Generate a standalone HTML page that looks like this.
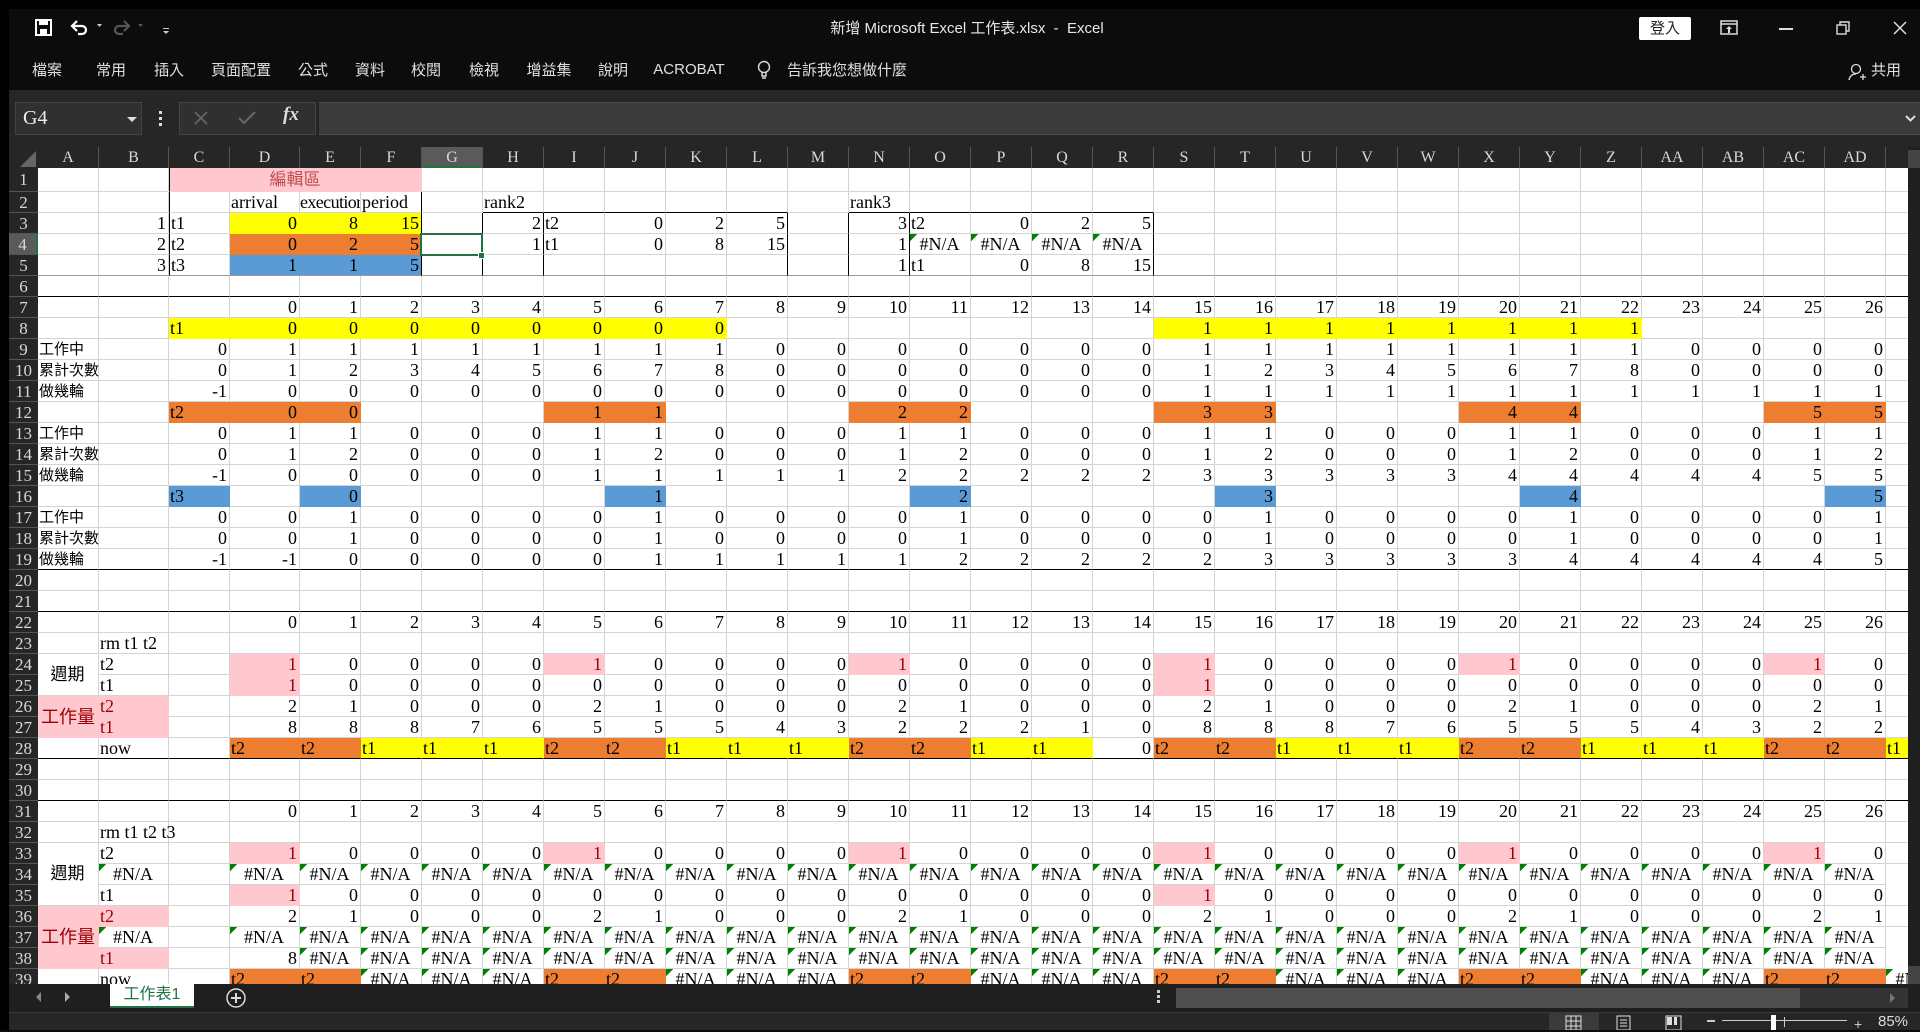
<!DOCTYPE html>
<html><head><meta charset="utf-8">
<style>
*{box-sizing:border-box;margin:0;padding:0}
html,body{width:1920px;height:1030px;overflow:hidden;background:#0c0c0c;font-family:"Liberation Sans","Noto Sans CJK TC",sans-serif}
.abs{position:absolute}
#left{left:0;top:0;width:9px;height:1030px;background:#000}
#top{left:0;top:0;width:1920px;height:9px;background:#000}
.tab{position:absolute;top:59px;color:#e0e0e0;font-size:15px;transform:translateX(-50%);white-space:nowrap}
#fa{left:9px;top:90px;width:1911px;height:57px;background:#262626}
#namebox{left:15px;top:102px;width:127px;height:33px;background:#303030;border:1px solid #444;color:#eee;font-family:"Liberation Serif",serif;font-size:20px;padding:4px 7px}
#btns{left:179px;top:102px;width:137px;height:33px;background:#303030;border:1px solid #444}
#fx{left:319px;top:102px;width:1601px;height:33px;background:#3b3b3b;border-top:1px solid #4a4a4a;border-bottom:1px solid #4a4a4a}
#colhdr{left:9px;top:147px;width:1899px;height:21px;background:#262626}
.ch{position:absolute;top:0;height:21px;color:#d8d8d8;font-family:"Liberation Serif",serif;font-size:16px;text-align:center;line-height:22px;border-right:1px solid #555}
#rowhdr{left:9px;top:168px;width:29px;height:816px;background:#262626;overflow:hidden}
.rh{height:21px;color:#d8d8d8;font-family:"Liberation Serif",serif;font-size:17px;text-align:center;line-height:21px;border-bottom:1px solid #555}
#grid{left:38px;top:168px;width:1870px;height:816px;overflow:hidden;background:#fff}
table{border-collapse:separate;border-spacing:0;table-layout:fixed;width:1909px;font-family:"Liberation Serif","Noto Serif CJK TC",serif;font-size:18px;color:#000}
td{height:21px;border-right:1px solid #d4d4d4;border-bottom:1px solid #d4d4d4;text-align:right;padding:0 2px 0 1px;white-space:nowrap;overflow:hidden;line-height:20px}
tr.r1 td{height:24px}
td.l{text-align:left}
td.c{text-align:center}
td.y{background:#ffff00;border-color:#ffff00}
td.o{background:#ed7d31;border-color:#ed7d31}
td.b{background:#5b9bd5;border-color:#5b9bd5}
td.p{background:#ffc7ce;border-color:#ffc7ce;color:#9c0006}
td.n{text-align:center;background:linear-gradient(135deg,#008000 0,#008000 5px,transparent 5px) no-repeat}
td.o.n{background:#ed7d31}
tr.k td{border-bottom:1px solid #000}
tr.g td{border-bottom:1px solid #999}
td.lb{border-left:1px solid #000}
td.rb{border-right:1px solid #000}
td.tb{border-bottom:1px solid #000}
.cjk{font-family:"Liberation Serif","Noto Sans CJK TC",sans-serif}
td.lab{font-family:"Noto Sans CJK TC",sans-serif;font-size:15px;overflow:visible;text-align:left;position:relative;z-index:2}
</style></head><body>
<div id="top" class="abs"></div>
<div id="left" class="abs"></div>
<svg class="abs" style="left:34px;top:19px" width="20" height="18" viewBox="0 0 20 18"><rect x="2" y="1" width="15" height="15" fill="none" stroke="#fff" stroke-width="2"/><rect x="5" y="1" width="9" height="5" fill="#fff"/><rect x="6" y="10" width="7" height="6" fill="#fff"/></svg>
<svg class="abs" style="left:70px;top:20px" width="34" height="16" viewBox="0 0 34 16"><path d="M3 6h9a4 4 0 0 1 0 8h-4" fill="none" stroke="#fff" stroke-width="2.2"/><path d="M7 1L2 6l5 5" fill="none" stroke="#fff" stroke-width="2.2"/><path d="M27 4l5 0-2.5 3z" fill="#ccc"/></svg>
<svg class="abs" style="left:112px;top:20px" width="34" height="16" viewBox="0 0 34 16"><path d="M16 6H7a4 4 0 0 0 0 8h4" fill="none" stroke="#555" stroke-width="2.2"/><path d="M12 1l5 5-5 5" fill="none" stroke="#555" stroke-width="2.2"/><path d="M26 4l5 0-2.5 3z" fill="#555"/></svg>
<svg class="abs" style="left:162px;top:27px" width="8" height="8"><rect x="1" y="1" width="6" height="1" fill="#ccc"/><path d="M1 4h6l-3 3z" fill="#ccc"/></svg>
<div class="abs" style="left:0;width:1934px;top:17px;text-align:center;color:#e8e8e8;font-size:15px">新增 Microsoft Excel 工作表.xlsx &nbsp;-&nbsp; Excel</div>
<div class="abs" style="left:1639px;top:17px;width:52px;height:23px;background:#fff;color:#222;font-size:15px;text-align:center;line-height:23px;border-radius:2px">登入</div>
<svg class="abs" style="left:1720px;top:20px" width="18" height="16"><rect x="1" y="1" width="16" height="13" fill="none" stroke="#ddd" stroke-width="1.5"/><line x1="1" y1="4" x2="17" y2="4" stroke="#ddd" stroke-width="1.5"/><path d="M9 6l-3 3h2v4h2V9h2z" fill="#ddd"/></svg>
<div class="abs" style="left:1779px;top:28px;width:14px;height:1.5px;background:#ddd"></div>
<svg class="abs" style="left:1836px;top:21px" width="15" height="15"><rect x="1" y="4" width="9" height="9" fill="none" stroke="#ddd" stroke-width="1.4"/><path d="M4 4V1h9v9h-3" fill="none" stroke="#ddd" stroke-width="1.4"/></svg>
<svg class="abs" style="left:1893px;top:21px" width="14" height="14"><path d="M1 1L13 13M13 1L1 13" stroke="#ddd" stroke-width="1.5"/></svg>
<div class="tab" style="left:47px">檔案</div>
<div class="tab" style="left:111px">常用</div>
<div class="tab" style="left:169px">插入</div>
<div class="tab" style="left:241px">頁面配置</div>
<div class="tab" style="left:313px">公式</div>
<div class="tab" style="left:370px">資料</div>
<div class="tab" style="left:426px">校閱</div>
<div class="tab" style="left:484px">檢視</div>
<div class="tab" style="left:549px">增益集</div>
<div class="tab" style="left:613px">說明</div>
<div class="tab" style="left:689px;top:61px">ACROBAT</div>
<svg class="abs" style="left:756px;top:60px" width="16" height="20"><circle cx="8" cy="7" r="5.5" fill="none" stroke="#ddd" stroke-width="1.4"/><path d="M6 12v4h4v-4M6 18h4" stroke="#ddd" stroke-width="1.4" fill="none"/></svg>
<div class="tab" style="left:847px">告訴我您想做什麼</div>
<svg class="abs" style="left:1848px;top:63px" width="18" height="18"><circle cx="8" cy="6" r="4.5" fill="none" stroke="#ddd" stroke-width="1.3"/><path d="M1 17c1-5 4-6 7-6M12 14h6M15 11v6" stroke="#ddd" stroke-width="1.3" fill="none"/></svg>
<div class="tab" style="left:1886px">共用</div>
<div id="fa" class="abs"></div>
<div id="namebox" class="abs">G4</div>
<div class="abs" style="left:127px;top:117px;width:0;height:0;border-left:5px solid transparent;border-right:5px solid transparent;border-top:5px solid #ddd"></div>
<div class="abs" style="left:159px;top:111px;width:3px;height:3px;background:#ddd;box-shadow:0 6px 0 #ddd,0 12px 0 #ddd"></div>
<div id="btns" class="abs"></div>
<svg class="abs" style="left:194px;top:111px" width="14" height="14"><path d="M1 1L13 13M13 1L1 13" stroke="#666" stroke-width="1.6"/></svg>
<svg class="abs" style="left:238px;top:111px" width="18" height="14"><path d="M1 7l5 5L17 1" stroke="#666" stroke-width="2.2" fill="none"/></svg>
<div class="abs" style="left:283px;top:104px;color:#ddd;font-family:'Liberation Serif',serif;font-style:italic;font-weight:bold;font-size:19px">fx</div>
<div id="fx" class="abs"></div>
<svg class="abs" style="left:1905px;top:115px" width="11" height="8"><path d="M1 1l4.5 4.5L10 1" stroke="#ddd" stroke-width="2" fill="none"/></svg>
<div id="colhdr" class="abs">
<div class="abs" style="left:11px;top:4px;width:0;height:0;border-left:16px solid transparent;border-bottom:16px solid #666"></div>
<div class="ch" style="left:29px;width:61px">A</div><div class="ch" style="left:90px;width:70px">B</div><div class="ch" style="left:160px;width:61px">C</div><div class="ch" style="left:221px;width:70px">D</div><div class="ch" style="left:291px;width:61px">E</div><div class="ch" style="left:352px;width:61px">F</div><div class="ch" style="left:413px;width:61px;background:#5a5a5a;border-bottom:2px solid #217346">G</div><div class="ch" style="left:474px;width:61px">H</div><div class="ch" style="left:535px;width:61px">I</div><div class="ch" style="left:596px;width:61px">J</div><div class="ch" style="left:657px;width:61px">K</div><div class="ch" style="left:718px;width:61px">L</div><div class="ch" style="left:779px;width:61px">M</div><div class="ch" style="left:840px;width:61px">N</div><div class="ch" style="left:901px;width:61px">O</div><div class="ch" style="left:962px;width:61px">P</div><div class="ch" style="left:1023px;width:61px">Q</div><div class="ch" style="left:1084px;width:61px">R</div><div class="ch" style="left:1145px;width:61px">S</div><div class="ch" style="left:1206px;width:61px">T</div><div class="ch" style="left:1267px;width:61px">U</div><div class="ch" style="left:1328px;width:61px">V</div><div class="ch" style="left:1389px;width:61px">W</div><div class="ch" style="left:1450px;width:61px">X</div><div class="ch" style="left:1511px;width:61px">Y</div><div class="ch" style="left:1572px;width:61px">Z</div><div class="ch" style="left:1633px;width:61px">AA</div><div class="ch" style="left:1694px;width:61px">AB</div><div class="ch" style="left:1755px;width:61px">AC</div><div class="ch" style="left:1816px;width:61px">AD</div>
</div>
<div id="rowhdr" class="abs">
<div class="rh" style="height:24px;line-height:24px">1</div><div class="rh">2</div><div class="rh">3</div><div class="rh" style="background:#5a5a5a;border-right:2px solid #217346">4</div><div class="rh">5</div><div class="rh">6</div><div class="rh">7</div><div class="rh">8</div><div class="rh">9</div><div class="rh">10</div><div class="rh">11</div><div class="rh">12</div><div class="rh">13</div><div class="rh">14</div><div class="rh">15</div><div class="rh">16</div><div class="rh">17</div><div class="rh">18</div><div class="rh">19</div><div class="rh">20</div><div class="rh">21</div><div class="rh">22</div><div class="rh">23</div><div class="rh">24</div><div class="rh">25</div><div class="rh">26</div><div class="rh">27</div><div class="rh">28</div><div class="rh">29</div><div class="rh">30</div><div class="rh">31</div><div class="rh">32</div><div class="rh">33</div><div class="rh">34</div><div class="rh">35</div><div class="rh">36</div><div class="rh">37</div><div class="rh">38</div><div class="rh">39</div>
</div>
<div id="grid" class="abs">
<table>
<colgroup><col style="width:61px"><col style="width:70px"><col style="width:61px"><col style="width:70px"><col span="27" style="width:61px"></colgroup>
<tr class="r1"><td></td><td></td><td colspan="4" class="p c lb cjk" style="font-size:17px;color:#c0504d">編輯區</td><td></td><td></td><td></td><td></td><td></td><td></td><td></td><td></td><td></td><td></td><td></td><td></td><td></td><td></td><td></td><td></td><td></td><td></td><td></td><td></td><td></td><td></td><td></td><td></td><td></td></tr>
<tr><td></td><td></td><td class="lb"></td><td class="l">arrival</td><td class="l" style="letter-spacing:-0.6px;padding:0">executior</td><td class="l rb">period</td><td></td><td class="l tb">rank2</td><td class="tb"></td><td class="tb"></td><td class="tb"></td><td class="tb"></td><td></td><td class="l tb">rank3</td><td class="tb"></td><td class="tb"></td><td class="tb"></td><td class="tb"></td><td></td><td></td><td></td><td></td><td></td><td></td><td></td><td></td><td></td><td></td><td></td><td></td><td></td></tr>
<tr><td></td><td>1</td><td class="l lb">t1</td><td class="y">0</td><td class="y">8</td><td class="y rb">15</td><td class="rb"></td><td class="rb">2</td><td class="l">t2</td><td>0</td><td>2</td><td class="rb">5</td><td class="rb"></td><td class="rb">3</td><td class="l">t2</td><td>0</td><td>2</td><td class="rb">5</td><td></td><td></td><td></td><td></td><td></td><td></td><td></td><td></td><td></td><td></td><td></td><td></td><td></td></tr>
<tr><td></td><td>2</td><td class="l lb">t2</td><td class="o">0</td><td class="o">2</td><td class="o rb">5</td><td class="rb"></td><td class="rb">1</td><td class="l">t1</td><td>0</td><td>8</td><td class="rb">15</td><td class="rb"></td><td class="rb">1</td><td class="n">#N/A</td><td class="n">#N/A</td><td class="n">#N/A</td><td class="n rb">#N/A</td><td></td><td></td><td></td><td></td><td></td><td></td><td></td><td></td><td></td><td></td><td></td><td></td><td></td></tr>
<tr class="g"><td></td><td>3</td><td class="l lb">t3</td><td class="b">1</td><td class="b">1</td><td class="b rb">5</td><td class="rb"></td><td class="rb"></td><td></td><td></td><td></td><td class="rb"></td><td class="rb"></td><td class="rb">1</td><td class="l">t1</td><td>0</td><td>8</td><td class="rb">15</td><td></td><td></td><td></td><td></td><td></td><td></td><td></td><td></td><td></td><td></td><td></td><td></td><td></td></tr>
<tr class="k"><td></td><td></td><td></td><td></td><td></td><td></td><td></td><td></td><td></td><td></td><td></td><td></td><td></td><td></td><td></td><td></td><td></td><td></td><td></td><td></td><td></td><td></td><td></td><td></td><td></td><td></td><td></td><td></td><td></td><td></td><td></td></tr>
<tr><td></td><td></td><td></td><td>0</td><td>1</td><td>2</td><td>3</td><td>4</td><td>5</td><td>6</td><td>7</td><td>8</td><td>9</td><td>10</td><td>11</td><td>12</td><td>13</td><td>14</td><td>15</td><td>16</td><td>17</td><td>18</td><td>19</td><td>20</td><td>21</td><td>22</td><td>23</td><td>24</td><td>25</td><td>26</td><td></td></tr>
<tr><td></td><td></td><td class="y l">t1</td><td class="y">0</td><td class="y">0</td><td class="y">0</td><td class="y">0</td><td class="y">0</td><td class="y">0</td><td class="y">0</td><td class="y">0</td><td></td><td></td><td></td><td></td><td></td><td></td><td></td><td class="y">1</td><td class="y">1</td><td class="y">1</td><td class="y">1</td><td class="y">1</td><td class="y">1</td><td class="y">1</td><td class="y">1</td><td></td><td></td><td></td><td></td><td></td></tr>
<tr><td class="lab">工作中</td><td></td><td>0</td><td>1</td><td>1</td><td>1</td><td>1</td><td>1</td><td>1</td><td>1</td><td>1</td><td>0</td><td>0</td><td>0</td><td>0</td><td>0</td><td>0</td><td>0</td><td>1</td><td>1</td><td>1</td><td>1</td><td>1</td><td>1</td><td>1</td><td>1</td><td>0</td><td>0</td><td>0</td><td>0</td><td></td></tr>
<tr><td class="lab">累計次數</td><td></td><td>0</td><td>1</td><td>2</td><td>3</td><td>4</td><td>5</td><td>6</td><td>7</td><td>8</td><td>0</td><td>0</td><td>0</td><td>0</td><td>0</td><td>0</td><td>0</td><td>1</td><td>2</td><td>3</td><td>4</td><td>5</td><td>6</td><td>7</td><td>8</td><td>0</td><td>0</td><td>0</td><td>0</td><td></td></tr>
<tr><td class="lab">做幾輪</td><td></td><td>-1</td><td>0</td><td>0</td><td>0</td><td>0</td><td>0</td><td>0</td><td>0</td><td>0</td><td>0</td><td>0</td><td>0</td><td>0</td><td>0</td><td>0</td><td>0</td><td>1</td><td>1</td><td>1</td><td>1</td><td>1</td><td>1</td><td>1</td><td>1</td><td>1</td><td>1</td><td>1</td><td>1</td><td></td></tr>
<tr><td></td><td></td><td class="o l">t2</td><td class="o">0</td><td class="o">0</td><td></td><td></td><td></td><td class="o">1</td><td class="o">1</td><td></td><td></td><td></td><td class="o">2</td><td class="o">2</td><td></td><td></td><td></td><td class="o">3</td><td class="o">3</td><td></td><td></td><td></td><td class="o">4</td><td class="o">4</td><td></td><td></td><td></td><td class="o">5</td><td class="o">5</td><td></td></tr>
<tr><td class="lab">工作中</td><td></td><td>0</td><td>1</td><td>1</td><td>0</td><td>0</td><td>0</td><td>1</td><td>1</td><td>0</td><td>0</td><td>0</td><td>1</td><td>1</td><td>0</td><td>0</td><td>0</td><td>1</td><td>1</td><td>0</td><td>0</td><td>0</td><td>1</td><td>1</td><td>0</td><td>0</td><td>0</td><td>1</td><td>1</td><td></td></tr>
<tr><td class="lab">累計次數</td><td></td><td>0</td><td>1</td><td>2</td><td>0</td><td>0</td><td>0</td><td>1</td><td>2</td><td>0</td><td>0</td><td>0</td><td>1</td><td>2</td><td>0</td><td>0</td><td>0</td><td>1</td><td>2</td><td>0</td><td>0</td><td>0</td><td>1</td><td>2</td><td>0</td><td>0</td><td>0</td><td>1</td><td>2</td><td></td></tr>
<tr><td class="lab">做幾輪</td><td></td><td>-1</td><td>0</td><td>0</td><td>0</td><td>0</td><td>0</td><td>1</td><td>1</td><td>1</td><td>1</td><td>1</td><td>2</td><td>2</td><td>2</td><td>2</td><td>2</td><td>3</td><td>3</td><td>3</td><td>3</td><td>3</td><td>4</td><td>4</td><td>4</td><td>4</td><td>4</td><td>5</td><td>5</td><td></td></tr>
<tr><td></td><td></td><td class="b l">t3</td><td></td><td class="b">0</td><td></td><td></td><td></td><td></td><td class="b">1</td><td></td><td></td><td></td><td></td><td class="b">2</td><td></td><td></td><td></td><td></td><td class="b">3</td><td></td><td></td><td></td><td></td><td class="b">4</td><td></td><td></td><td></td><td></td><td class="b">5</td><td></td></tr>
<tr><td class="lab">工作中</td><td></td><td>0</td><td>0</td><td>1</td><td>0</td><td>0</td><td>0</td><td>0</td><td>1</td><td>0</td><td>0</td><td>0</td><td>0</td><td>1</td><td>0</td><td>0</td><td>0</td><td>0</td><td>1</td><td>0</td><td>0</td><td>0</td><td>0</td><td>1</td><td>0</td><td>0</td><td>0</td><td>0</td><td>1</td><td></td></tr>
<tr><td class="lab">累計次數</td><td></td><td>0</td><td>0</td><td>1</td><td>0</td><td>0</td><td>0</td><td>0</td><td>1</td><td>0</td><td>0</td><td>0</td><td>0</td><td>1</td><td>0</td><td>0</td><td>0</td><td>0</td><td>1</td><td>0</td><td>0</td><td>0</td><td>0</td><td>1</td><td>0</td><td>0</td><td>0</td><td>0</td><td>1</td><td></td></tr>
<tr class="k"><td class="lab">做幾輪</td><td></td><td>-1</td><td>-1</td><td>0</td><td>0</td><td>0</td><td>0</td><td>0</td><td>1</td><td>1</td><td>1</td><td>1</td><td>1</td><td>2</td><td>2</td><td>2</td><td>2</td><td>2</td><td>3</td><td>3</td><td>3</td><td>3</td><td>3</td><td>4</td><td>4</td><td>4</td><td>4</td><td>4</td><td>5</td><td></td></tr>
<tr><td></td><td></td><td></td><td></td><td></td><td></td><td></td><td></td><td></td><td></td><td></td><td></td><td></td><td></td><td></td><td></td><td></td><td></td><td></td><td></td><td></td><td></td><td></td><td></td><td></td><td></td><td></td><td></td><td></td><td></td><td></td></tr>
<tr class="k"><td></td><td></td><td></td><td></td><td></td><td></td><td></td><td></td><td></td><td></td><td></td><td></td><td></td><td></td><td></td><td></td><td></td><td></td><td></td><td></td><td></td><td></td><td></td><td></td><td></td><td></td><td></td><td></td><td></td><td></td><td></td></tr>
<tr><td></td><td></td><td></td><td>0</td><td>1</td><td>2</td><td>3</td><td>4</td><td>5</td><td>6</td><td>7</td><td>8</td><td>9</td><td>10</td><td>11</td><td>12</td><td>13</td><td>14</td><td>15</td><td>16</td><td>17</td><td>18</td><td>19</td><td>20</td><td>21</td><td>22</td><td>23</td><td>24</td><td>25</td><td>26</td><td></td></tr>
<tr><td></td><td class="l">rm t1 t2</td><td></td><td></td><td></td><td></td><td></td><td></td><td></td><td></td><td></td><td></td><td></td><td></td><td></td><td></td><td></td><td></td><td></td><td></td><td></td><td></td><td></td><td></td><td></td><td></td><td></td><td></td><td></td><td></td><td></td></tr>
<tr><td rowspan="2" class="c cjk" style="font-size:17px">週期</td><td class="l">t2</td><td></td><td class="p">1</td><td>0</td><td>0</td><td>0</td><td>0</td><td class="p">1</td><td>0</td><td>0</td><td>0</td><td>0</td><td class="p">1</td><td>0</td><td>0</td><td>0</td><td>0</td><td class="p">1</td><td>0</td><td>0</td><td>0</td><td>0</td><td class="p">1</td><td>0</td><td>0</td><td>0</td><td>0</td><td class="p">1</td><td>0</td><td></td></tr>
<tr><td class="l">t1</td><td></td><td class="p">1</td><td>0</td><td>0</td><td>0</td><td>0</td><td>0</td><td>0</td><td>0</td><td>0</td><td>0</td><td>0</td><td>0</td><td>0</td><td>0</td><td>0</td><td class="p">1</td><td>0</td><td>0</td><td>0</td><td>0</td><td>0</td><td>0</td><td>0</td><td>0</td><td>0</td><td>0</td><td>0</td><td></td></tr>
<tr><td rowspan="2" class="p c cjk" style="font-size:18px;padding:0">工作量</td><td class="p l">t2</td><td></td><td>2</td><td>1</td><td>0</td><td>0</td><td>0</td><td>2</td><td>1</td><td>0</td><td>0</td><td>0</td><td>2</td><td>1</td><td>0</td><td>0</td><td>0</td><td>2</td><td>1</td><td>0</td><td>0</td><td>0</td><td>2</td><td>1</td><td>0</td><td>0</td><td>0</td><td>2</td><td>1</td><td></td></tr>
<tr><td class="p l">t1</td><td></td><td>8</td><td>8</td><td>8</td><td>7</td><td>6</td><td>5</td><td>5</td><td>5</td><td>4</td><td>3</td><td>2</td><td>2</td><td>2</td><td>1</td><td>0</td><td>8</td><td>8</td><td>8</td><td>7</td><td>6</td><td>5</td><td>5</td><td>5</td><td>4</td><td>3</td><td>2</td><td>2</td><td></td></tr>
<tr class="k"><td></td><td class="l">now</td><td></td><td class="o l">t2</td><td class="o l">t2</td><td class="y l">t1</td><td class="y l">t1</td><td class="y l">t1</td><td class="o l">t2</td><td class="o l">t2</td><td class="y l">t1</td><td class="y l">t1</td><td class="y l">t1</td><td class="o l">t2</td><td class="o l">t2</td><td class="y l">t1</td><td class="y l">t1</td><td>0</td><td class="o l">t2</td><td class="o l">t2</td><td class="y l">t1</td><td class="y l">t1</td><td class="y l">t1</td><td class="o l">t2</td><td class="o l">t2</td><td class="y l">t1</td><td class="y l">t1</td><td class="y l">t1</td><td class="o l">t2</td><td class="o l">t2</td><td class="y l">t1</td></tr>
<tr><td></td><td></td><td></td><td></td><td></td><td></td><td></td><td></td><td></td><td></td><td></td><td></td><td></td><td></td><td></td><td></td><td></td><td></td><td></td><td></td><td></td><td></td><td></td><td></td><td></td><td></td><td></td><td></td><td></td><td></td><td></td></tr>
<tr class="k"><td></td><td></td><td></td><td></td><td></td><td></td><td></td><td></td><td></td><td></td><td></td><td></td><td></td><td></td><td></td><td></td><td></td><td></td><td></td><td></td><td></td><td></td><td></td><td></td><td></td><td></td><td></td><td></td><td></td><td></td><td></td></tr>
<tr><td></td><td></td><td></td><td>0</td><td>1</td><td>2</td><td>3</td><td>4</td><td>5</td><td>6</td><td>7</td><td>8</td><td>9</td><td>10</td><td>11</td><td>12</td><td>13</td><td>14</td><td>15</td><td>16</td><td>17</td><td>18</td><td>19</td><td>20</td><td>21</td><td>22</td><td>23</td><td>24</td><td>25</td><td>26</td><td></td></tr>
<tr><td></td><td class="l" style="overflow:visible">rm t1 t2 t3</td><td></td><td></td><td></td><td></td><td></td><td></td><td></td><td></td><td></td><td></td><td></td><td></td><td></td><td></td><td></td><td></td><td></td><td></td><td></td><td></td><td></td><td></td><td></td><td></td><td></td><td></td><td></td><td></td><td></td></tr>
<tr><td rowspan="3" class="c cjk" style="font-size:17px">週期</td><td class="l">t2</td><td></td><td class="p">1</td><td>0</td><td>0</td><td>0</td><td>0</td><td class="p">1</td><td>0</td><td>0</td><td>0</td><td>0</td><td class="p">1</td><td>0</td><td>0</td><td>0</td><td>0</td><td class="p">1</td><td>0</td><td>0</td><td>0</td><td>0</td><td class="p">1</td><td>0</td><td>0</td><td>0</td><td>0</td><td class="p">1</td><td>0</td><td></td></tr>
<tr><td class="n">#N/A</td><td></td><td class="n">#N/A</td><td class="n">#N/A</td><td class="n">#N/A</td><td class="n">#N/A</td><td class="n">#N/A</td><td class="n">#N/A</td><td class="n">#N/A</td><td class="n">#N/A</td><td class="n">#N/A</td><td class="n">#N/A</td><td class="n">#N/A</td><td class="n">#N/A</td><td class="n">#N/A</td><td class="n">#N/A</td><td class="n">#N/A</td><td class="n">#N/A</td><td class="n">#N/A</td><td class="n">#N/A</td><td class="n">#N/A</td><td class="n">#N/A</td><td class="n">#N/A</td><td class="n">#N/A</td><td class="n">#N/A</td><td class="n">#N/A</td><td class="n">#N/A</td><td class="n">#N/A</td><td class="n">#N/A</td></tr>
<tr><td class="l">t1</td><td></td><td class="p">1</td><td>0</td><td>0</td><td>0</td><td>0</td><td>0</td><td>0</td><td>0</td><td>0</td><td>0</td><td>0</td><td>0</td><td>0</td><td>0</td><td>0</td><td class="p">1</td><td>0</td><td>0</td><td>0</td><td>0</td><td>0</td><td>0</td><td>0</td><td>0</td><td>0</td><td>0</td><td>0</td><td></td></tr>
<tr><td rowspan="3" class="p c cjk" style="font-size:18px;padding:0">工作量</td><td class="p l">t2</td><td></td><td>2</td><td>1</td><td>0</td><td>0</td><td>0</td><td>2</td><td>1</td><td>0</td><td>0</td><td>0</td><td>2</td><td>1</td><td>0</td><td>0</td><td>0</td><td>2</td><td>1</td><td>0</td><td>0</td><td>0</td><td>2</td><td>1</td><td>0</td><td>0</td><td>0</td><td>2</td><td>1</td><td></td></tr>
<tr><td class="n">#N/A</td><td></td><td class="n">#N/A</td><td class="n">#N/A</td><td class="n">#N/A</td><td class="n">#N/A</td><td class="n">#N/A</td><td class="n">#N/A</td><td class="n">#N/A</td><td class="n">#N/A</td><td class="n">#N/A</td><td class="n">#N/A</td><td class="n">#N/A</td><td class="n">#N/A</td><td class="n">#N/A</td><td class="n">#N/A</td><td class="n">#N/A</td><td class="n">#N/A</td><td class="n">#N/A</td><td class="n">#N/A</td><td class="n">#N/A</td><td class="n">#N/A</td><td class="n">#N/A</td><td class="n">#N/A</td><td class="n">#N/A</td><td class="n">#N/A</td><td class="n">#N/A</td><td class="n">#N/A</td><td class="n">#N/A</td></tr>
<tr><td class="p l">t1</td><td></td><td>8</td><td class="n">#N/A</td><td class="n">#N/A</td><td class="n">#N/A</td><td class="n">#N/A</td><td class="n">#N/A</td><td class="n">#N/A</td><td class="n">#N/A</td><td class="n">#N/A</td><td class="n">#N/A</td><td class="n">#N/A</td><td class="n">#N/A</td><td class="n">#N/A</td><td class="n">#N/A</td><td class="n">#N/A</td><td class="n">#N/A</td><td class="n">#N/A</td><td class="n">#N/A</td><td class="n">#N/A</td><td class="n">#N/A</td><td class="n">#N/A</td><td class="n">#N/A</td><td class="n">#N/A</td><td class="n">#N/A</td><td class="n">#N/A</td><td class="n">#N/A</td><td class="n">#N/A</td></tr>
<tr><td></td><td class="l">now</td><td></td><td class="o l">t2</td><td class="o l">t2</td><td class="n">#N/A</td><td class="n">#N/A</td><td class="n">#N/A</td><td class="o l">t2</td><td class="o l">t2</td><td class="n">#N/A</td><td class="n">#N/A</td><td class="n">#N/A</td><td class="o l">t2</td><td class="o l">t2</td><td class="n">#N/A</td><td class="n">#N/A</td><td class="n">#N/A</td><td class="o l">t2</td><td class="o l">t2</td><td class="n">#N/A</td><td class="n">#N/A</td><td class="n">#N/A</td><td class="o l">t2</td><td class="o l">t2</td><td class="n">#N/A</td><td class="n">#N/A</td><td class="n">#N/A</td><td class="o l">t2</td><td class="o l">t2</td><td class="n">#N/A</td></tr>
</table>
<div class="abs" style="left:382px;top:65px;width:63px;height:23px;border:2px solid #217346"></div>
<div class="abs" style="left:440px;top:84px;width:7px;height:7px;background:#217346;border:1px solid #fff"></div>
</div>
<div class="abs" style="left:1908px;top:147px;width:12px;height:837px;background:#1f1f1f"></div>
<div class="abs" style="left:1908px;top:150px;width:12px;height:18px;background:#444"></div>
<div class="abs" style="left:1908px;top:966px;width:12px;height:18px;background:#444"></div>
<div class="abs" style="left:9px;top:984px;width:1911px;height:28px;background:#1f1f1f"></div>
<div class="abs" style="left:36px;top:992px;width:0;height:0;border-top:5px solid transparent;border-bottom:5px solid transparent;border-right:5px solid #888"></div>
<div class="abs" style="left:65px;top:992px;width:0;height:0;border-top:5px solid transparent;border-bottom:5px solid transparent;border-left:5px solid #aaa"></div>
<div class="abs" style="left:110px;top:984px;width:84px;height:24px;background:#fff;border-bottom:2px solid #217346;color:#217346;font-size:16px;text-align:center;line-height:22px">工作表1</div>
<svg class="abs" style="left:225px;top:987px" width="22" height="22"><circle cx="11" cy="11" r="9" fill="none" stroke="#ddd" stroke-width="1.5"/><path d="M6 11h10M11 6v10" stroke="#ddd" stroke-width="2"/></svg>
<div class="abs" style="left:1157px;top:990px;width:3px;height:3px;background:#ccc;box-shadow:0 5px 0 #ccc,0 10px 0 #ccc"></div>
<div class="abs" style="left:1176px;top:988px;width:732px;height:20px;background:#333"></div>
<div class="abs" style="left:1176px;top:988px;width:624px;height:20px;background:#4f4f4f"></div>
<div class="abs" style="left:1890px;top:993px;width:0;height:0;border-top:5px solid transparent;border-bottom:5px solid transparent;border-left:5px solid #777"></div>
<div class="abs" style="left:9px;top:1012px;width:1911px;height:18px;background:#262626;border-top:1px solid #3a3a3a"></div>
<div class="abs" style="left:1549px;top:1013px;width:50px;height:17px;background:#3a3a3a"></div>
<svg class="abs" style="left:1565px;top:1015px" width="17" height="15"><path d="M1 1h15v14H1zM1 6h15M1 11h15M6 1v14M11 1v14" stroke="#ddd" fill="none"/></svg>
<svg class="abs" style="left:1615px;top:1015px" width="17" height="15"><path d="M2 1h13v14H2zM5 5h7M5 8h7M5 11h7" stroke="#ddd" fill="none"/></svg>
<svg class="abs" style="left:1665px;top:1015px" width="17" height="15"><path d="M1 1h15v14H1z" stroke="#ddd" fill="none"/><rect x="2" y="2" width="5" height="8" fill="#ddd"/><rect x="9" y="2" width="3" height="8" fill="#ddd"/></svg>
<div class="abs" style="left:1707px;top:1020px;width:8px;height:1.5px;background:#ccc"></div>
<div class="abs" style="left:1722px;top:1020px;width:125px;height:1px;background:#ccc"></div>
<div class="abs" style="left:1771px;top:1015px;width:5px;height:15px;background:#fff"></div>
<div class="abs" style="left:1784px;top:1017px;width:1px;height:10px;background:#ccc"></div>
<div class="abs" style="left:1854px;top:1016px;color:#ccc;font-size:14px">+</div>
<div class="abs" style="left:1878px;top:1013px;color:#ddd;font-size:15px">85%</div>
</body></html>
